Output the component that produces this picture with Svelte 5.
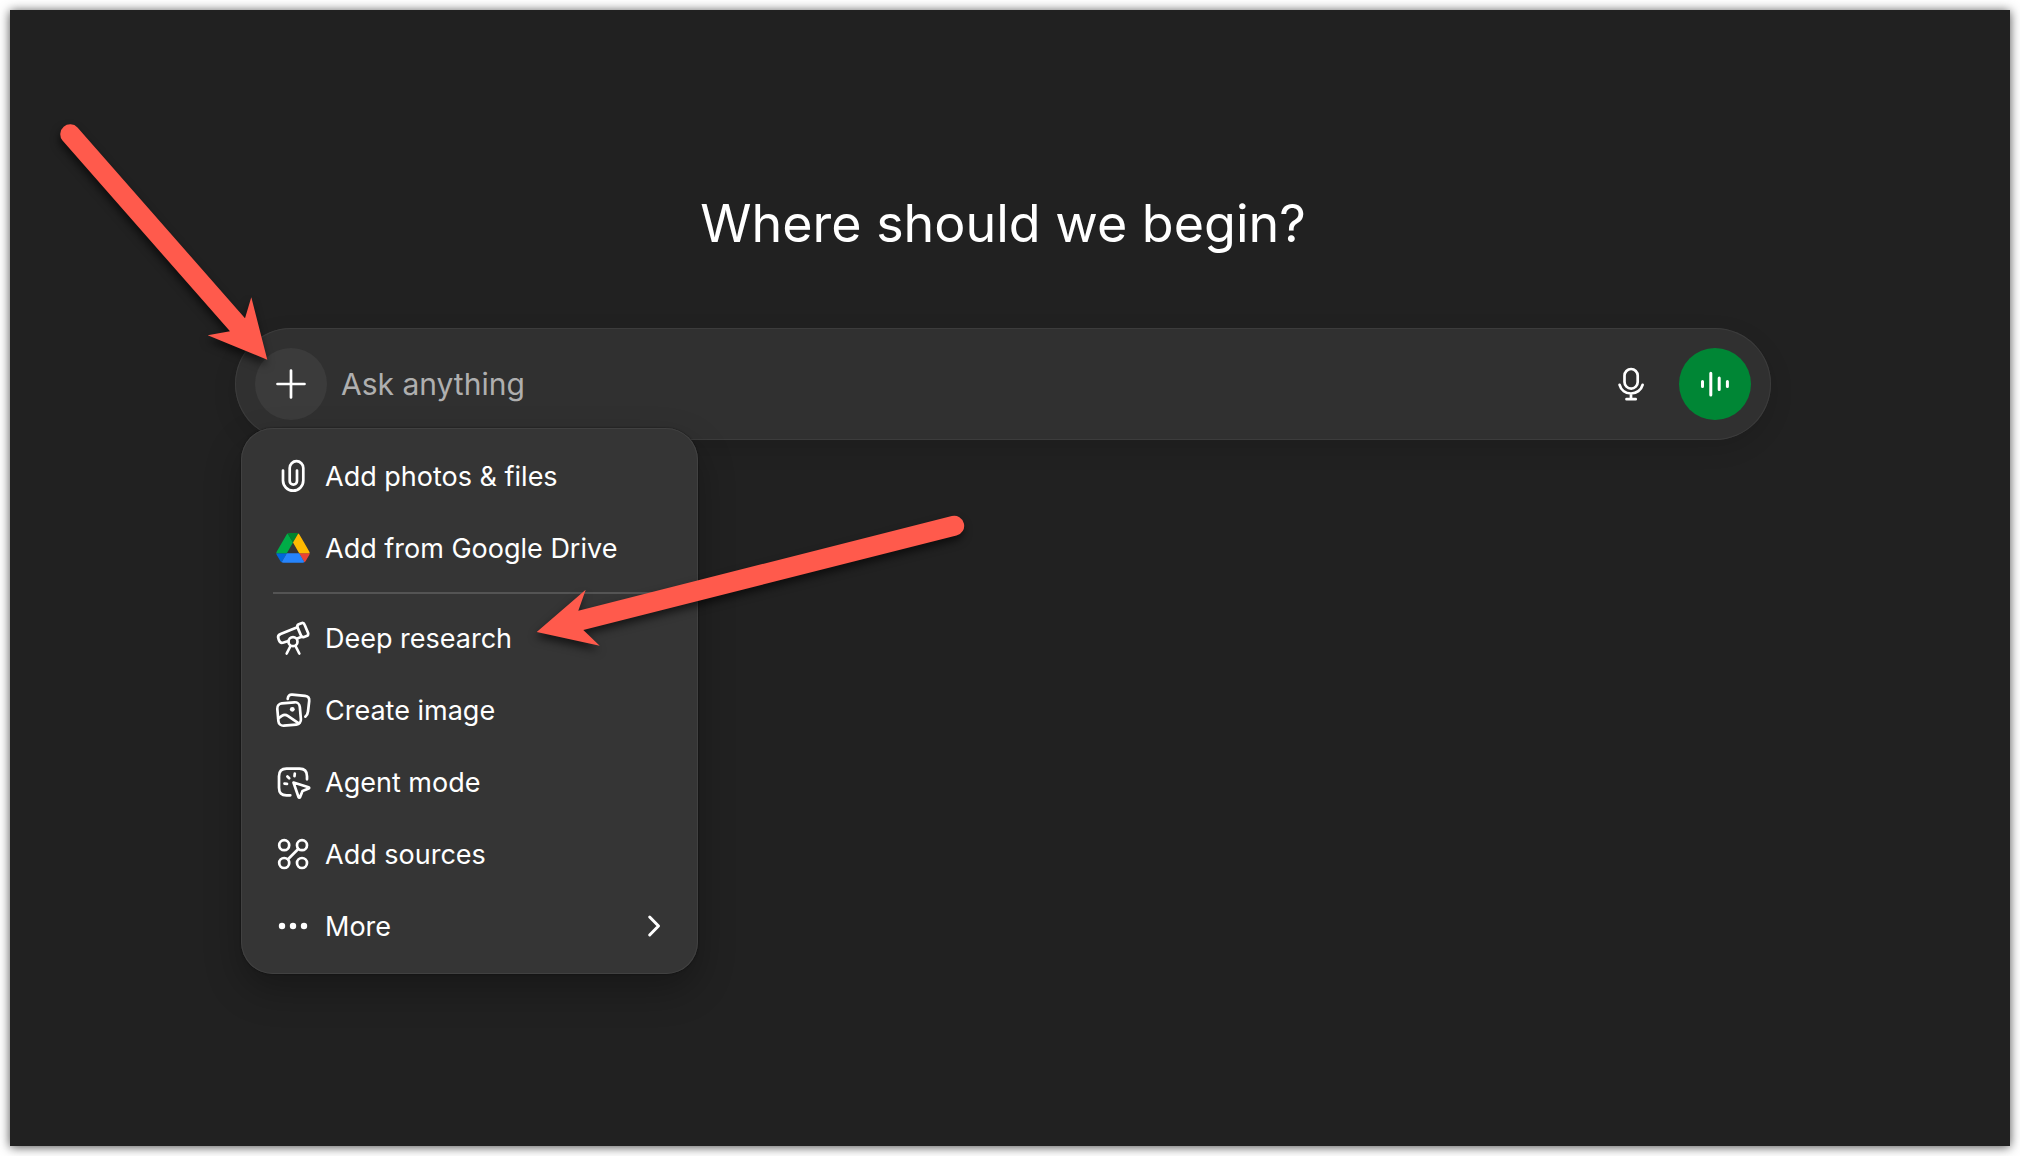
<script>
  let prompt = $state('');
</script>

<main>
  <section class="home">
    <h1>Where should we begin?</h1>

    <div class="composer">
      <button class="round plus" aria-label="Add files and more" aria-expanded="true">
        <svg viewBox="0 0 40 40"><path d="M20 6.5v27M6.5 20h27" /></svg>
      </button>
      <input type="text" bind:value={prompt} placeholder="Ask anything" aria-label="Ask anything" />
      <button class="round" aria-label="Dictate">
        <svg viewBox="0 0 40 40">
          <rect x="13.5" y="5" width="13.2" height="19.6" rx="6.6" />
          <path d="M8.6 20.8C10 26 14.500 29.500 20 29.500S30.200 26 31.600 20.800M20 29.500V35M15.500 35.200h9.200" />
        </svg>
      </button>
      <button class="round voice" aria-label="Use voice mode">
        <svg viewBox="0 0 40 40">
          <path d="M7.500 17.600v5M15.800 9.200v21.800M24.200 14v11.400M32.400 17.600v5" />
        </svg>
      </button>

      <div class="menu" role="menu">
        <button class="item" role="menuitem">
          <svg viewBox="0 0 40 40">
            <path d="M10 14.500V24.500A10.150 10.150 0 0 0 30.300 24.500V12A6.800 6.800 0 0 0 16.700 12V25A3.650 3.650 0 0 0 24 25V14.500" />
          </svg>
          <span>Add photos &amp; files</span>
        </button>
        <button class="item" role="menuitem">
          <svg class="drive" viewBox="-8.700 -13 104.700 104.700">
            <path d="m6.600 66.850 3.850 6.650c.8 1.400 1.950 2.500 3.300 3.300l13.750-23.800h-27.500c0 1.550.4 3.100 1.200 4.500z" fill="#0066da" />
            <path d="m43.650 25-13.750-23.800c-1.350.8-2.500 1.900-3.300 3.300l-25.400 44a9.060 9.060 0 0 0-1.200 4.500h27.500z" fill="#00ac47" />
            <path d="m73.550 76.800c1.350-.8 2.500-1.900 3.300-3.300l1.600-2.750 7.650-13.250c.8-1.400 1.200-2.950 1.200-4.500h-27.500l5.850 11.500z" fill="#ea4335" />
            <path d="m43.650 25 13.750-23.800c-1.350-.8-2.900-1.200-4.500-1.200h-18.500c-1.600 0-3.150.45-4.500 1.200z" fill="#00832d" />
            <path d="m59.800 53h-32.300l-13.750 23.800c1.350.8 2.900 1.200 4.500 1.200h50.800c1.600 0 3.150-.45 4.500-1.200z" fill="#2684fc" />
            <path d="m73.400 26.500-12.700-22c-.8-1.400-1.950-2.500-3.300-3.300l-13.750 23.800 16.150 28h27.450c0-1.550-.4-3.100-1.200-4.500z" fill="#ffba00" />
          </svg>
          <span>Add from Google Drive</span>
        </button>
        <hr />
        <button class="item" role="menuitem">
          <svg viewBox="0 0 40 40">
            <path d="M25.800 6.300L28.400 5.200C30 4.600 31 5.200 31.600 6.800L35 14.800C35.600 16.400 35 17.600 33.600 18.100L31 19C29.500 19.500 28.600 19 28 17.500L24.600 9.600C24 8 24.400 6.900 25.800 6.300Z" />
            <path d="M24.300 9.200L7.600 15.900C5.400 16.800 4.600 18.400 5.400 20.600L6 22.300C6.800 24.500 8.400 25.300 10.600 24.500L15.500 23M24.300 20.600L28.600 18.800" />
            <circle cx="20" cy="23.700" r="4.500" />
            <path d="M17.500 28L13.700 35.500M22.500 28L26.300 35.500" />
          </svg>
          <span>Deep research</span>
        </button>
        <button class="item" role="menuitem">
          <svg viewBox="0 0 40 40">
            <rect x="4.800" y="12.800" width="22.600" height="22.400" rx="5" transform="rotate(-5 16 24)" />
            <path d="M5.300 28.500L8.800 25.900C10.800 24.600 12.800 24.500 14.800 25.900L25.800 33.300" />
            <circle class="solid" cx="19.300" cy="19.300" r="2.400" />
            <path d="M14.700 8.800C15 5.800 16.600 4.400 19.300 4.700L32 5.900C35 6.200 36.500 8 36.200 11L35 21.500C34.700 24 34 25.600 32.400 26.700" />
          </svg>
          <span>Create image</span>
        </button>
        <button class="item" role="menuitem">
          <svg viewBox="0 0 40 40">
            <path d="M17.300 33.300H13.500C8.500 33.300 6 30.800 6 25.800V14.200C6 9.200 8.500 6.700 13.500 6.700H26.500C31.500 6.700 34 9.200 34 14.200V17.300" />
            <path d="M20.500 20.500L35.600 25.200C36.400 25.500 36.400 26.300 35.700 26.600L29.500 29L27 35.200C26.700 35.900 25.900 35.900 25.600 35.200Z" />
            <path d="M21.800 11.600L21.500 14.200M14.400 14.500L16.200 16.300M11.500 21.700L14 21.900" />
          </svg>
          <span>Agent mode</span>
        </button>
        <button class="item" role="menuitem">
          <svg viewBox="0 0 40 40">
            <circle cx="11.200" cy="11.200" r="5" />
            <circle cx="29" cy="11.200" r="5" />
            <circle cx="11.200" cy="29" r="5" />
            <circle cx="29" cy="29" r="5" />
            <path d="M15 25.200L25.200 15" />
          </svg>
          <span>Add sources</span>
        </button>
        <button class="item" role="menuitem" aria-haspopup="menu">
          <svg viewBox="0 0 40 40">
            <circle class="solid" cx="9" cy="20" r="3.200" />
            <circle class="solid" cx="20" cy="20" r="3.200" />
            <circle class="solid" cx="31" cy="20" r="3.200" />
          </svg>
          <span>More</span>
          <svg class="chevron" viewBox="0 0 24 40"><path d="M7.700 11L16.500 20L7.700 29" /></svg>
        </button>
      </div>
    </div>
  </section>

  <svg class="arrows" width="1000" height="700" viewBox="0 0 1000 700" aria-hidden="true">
    <path d="M77.500 127.400L245 318.300L251.300 297.300L267.300 359.700L207.700 335.300L230 331.300L62.500 140.600A10 10 0 0 1 77.500 127.400Z" />
    <path d="M951.800 516.100L578.300 610.700L585.700 589.700L536.700 632L599.700 645.700L583.300 630L956.500 535.600A10 10 0 0 0 951.800 516.100Z" />
  </svg>
</main>

<style>
  :global(body) {
    background: #fff;
  }

  main {
    position: relative;
    box-sizing: border-box;
    min-height: 100vh;
    padding: 10px;
    display: flex;
    overflow: hidden;
    font-family: Inter, "Liberation Sans", sans-serif;
    color: #fff;
  }

  .home {
    flex: 1;
    padding: 182px 239px 0 225px;
    background: #212121;
    box-shadow: 0 1px 10px rgba(0, 0, 0, 0.7);
  }

  h1 {
    margin: 0 0 72px;
    font-size: 52px;
    line-height: 64px;
    font-weight: 400;
    text-align: center;
  }

  button {
    border: 0;
    padding: 0;
    background: none;
    color: inherit;
    font: inherit;
    cursor: pointer;
  }

  svg {
    flex: none;
    width: 40px;
    height: 40px;
    fill: none;
    stroke: currentColor;
    stroke-width: 2.7;
    stroke-linecap: round;
    stroke-linejoin: round;
  }

  .solid {
    fill: currentColor;
    stroke: none;
  }

  .composer {
    position: relative;
    display: flex;
    align-items: center;
    gap: 12px;
    padding: 20px;
    border-radius: 56px;
    background: #303030;
    box-shadow: inset 0 0 0 1px #3c3c3c, 0 8px 24px rgba(0, 0, 0, 0.12);
  }

  .round {
    display: flex;
    align-items: center;
    justify-content: center;
    width: 72px;
    height: 72px;
    border-radius: 50%;
  }

  .plus {
    background: #3b3b3b;
  }

  .voice {
    background: #008635;
  }

  .voice svg {
    stroke-width: 3;
  }

  input {
    flex: 1;
    min-width: 0;
    padding: 0 2px;
    border: 0;
    outline: 0;
    background: none;
    color: #fff;
    font: inherit;
    font-size: 30px;
    line-height: 40px;
  }

  input::placeholder {
    color: #afafaf;
    opacity: 1;
  }

  .menu {
    position: absolute;
    top: 100px;
    left: 6px;
    width: 457px;
    padding: 12px 0;
    border-radius: 32px;
    background: #353535;
    box-shadow: inset 0 0 0 1px #414141, 0 0 2px rgba(0, 0, 0, 0.6), 0 16px 36px rgba(0, 0, 0, 0.28);
  }

  .item {
    display: flex;
    align-items: center;
    gap: 12px;
    width: 100%;
    height: 72px;
    padding: 0 32px;
    font-size: 27px;
    text-align: left;
  }

  .item span {
    flex: 1;
  }

  .drive {
    stroke: none;
  }

  .chevron {
    width: 24px;
    stroke-width: 3;
  }

  hr {
    height: 2px;
    margin: 8px 32px;
    border: 0;
    background: #545454;
  }

  .arrows {
    position: absolute;
    top: 0;
    left: 0;
    width: 1000px;
    height: 700px;
    fill: #ff5a4c;
    stroke: none;
    pointer-events: none;
    filter: drop-shadow(-1px 5px 4px rgba(0, 0, 0, 0.6));
  }
</style>
